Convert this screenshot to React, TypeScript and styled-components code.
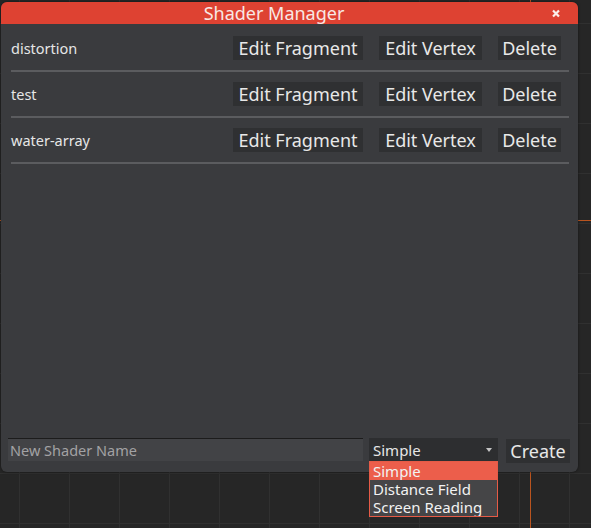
import React from 'react'
import styled, { createGlobalStyle } from 'styled-components'

const shaders = ['distortion', 'test', 'water-array']
const shaderTypes = ['Simple', 'Distance Field', 'Screen Reading']

const GlobalStyle = createGlobalStyle`
  html, body {
    margin: 0;
    padding: 0;
  }

  body {
    height: 528px;
    overflow: hidden;
    font-family: 'Noto Sans', 'DejaVu Sans', sans-serif;
    background-color: #262626;
    background-image:
      linear-gradient(to right, transparent 530px, #b9541f 530px, #b9541f 531px, transparent 531px),
      linear-gradient(to bottom, transparent 220px, #b9541f 220px, #b9541f 221px, transparent 221px),
      linear-gradient(to right, #303030 1px, transparent 1px),
      linear-gradient(to bottom, #303030 1px, transparent 1px);
    background-size: 100% 100%, 100% 100%, 50px 50px, 50px 50px;
    background-position: 0 0, 0 0, 19px 23px, 19px 23px;
    background-repeat: no-repeat, no-repeat, repeat, repeat;
  }
`

const Window = styled.div`
  margin: 2px 0 0 1px;
  width: 577px;
  height: 470px;
  display: flex;
  flex-direction: column;
  background: #3a3b3e;
  border-radius: 6px;
  box-shadow: 0 0 3px rgba(0, 0, 0, 0.5);
`

const TitleBar = styled.div`
  height: 22px;
  display: flex;
  align-items: center;
  background: #de4232;
  border-radius: 6px 6px 0 0;
  color: #f8e8e4;
  font-size: 18px;
`

const Title = styled.span`
  flex: 1;
  text-align: center;
  line-height: 22px;
`

const CloseButton = styled.button`
  width: 31px;
  padding: 0 0 0 5px;
  border: 0;
  background: none;
  display: flex;
`

const ShaderList = styled.div`
  padding: 12px 9px 0 10px;
`

const ShaderRow = styled.div`
  display: flex;
  align-items: center;
  height: 24px;
  padding-bottom: 10px;
  margin-bottom: 10px;
  border-bottom: 2px solid #5b5c5f;
`

const ShaderName = styled.span`
  flex: 1;
  color: #e6e6e6;
  font-size: 14.5px;
`

const Actions = styled.div`
  display: flex;
  gap: 16px;
  margin-right: 8px;
`

const ActionButton = styled.button<{ $width: number }>`
  width: ${p => p.$width}px;
  height: 24px;
  padding: 0;
  border: 0;
  background: #2f3032;
  color: #e8e8e8;
  font-family: inherit;
  font-size: 18px;
  line-height: 24px;
  text-align: center;
`

const Footer = styled.div`
  margin-top: auto;
  display: flex;
  align-items: flex-start;
  padding: 0 8px 9px 7px;
`

const NameInput = styled.input`
  flex: 1;
  height: 23px;
  box-sizing: border-box;
  padding: 0 2px;
  border: 0;
  border-top: 1px solid #1c1c1c;
  background: #424346;
  color: #e6e6e6;
  font-family: inherit;
  font-size: 14.5px;
  outline: none;

  &::placeholder {
    color: #a2a2a4;
  }
`

const SelectWrap = styled.div`
  position: relative;
  margin-left: 6px;
  width: 129px;
`

const SelectBox = styled.div`
  height: 23px;
  display: flex;
  align-items: center;
  justify-content: space-between;
  padding: 0 6px 0 4px;
  background: #2d2e30;
  color: #e6e6e6;
  font-size: 15px;
`

const Menu = styled.ul`
  position: absolute;
  top: 23px;
  left: 0;
  width: 129px;
  box-sizing: border-box;
  margin: 0;
  padding: 0;
  list-style: none;
  border: 1px solid #e65b47;
  background: #454547;
`

const MenuItem = styled.li<{ $active?: boolean }>`
  height: 18px;
  overflow: hidden;
  line-height: 18px;
  padding: 0 3px;
  background: ${p => (p.$active ? '#ec5e4b' : 'transparent')};
  color: #f2f2f2;
  font-size: 15px;
`

const CreateButton = styled(ActionButton)`
  margin-left: 8px;
  margin-top: 1px;
`

export default function App() {
  return (
    <>
      <GlobalStyle />
      <Window>
        <TitleBar>
          <Title>Shader Manager</Title>
          <CloseButton>
            <svg width="8" height="9" viewBox="0 0 8 9">
              <path d="M1 1.5L7 7.5M7 1.5L1 7.5" stroke="#fbeeea" strokeWidth="2.2" />
            </svg>
          </CloseButton>
        </TitleBar>
        <ShaderList>
          {shaders.map(name => (
            <ShaderRow key={name}>
              <ShaderName>{name}</ShaderName>
              <Actions>
                <ActionButton $width={130}>Edit Fragment</ActionButton>
                <ActionButton $width={103}>Edit Vertex</ActionButton>
                <ActionButton $width={63}>Delete</ActionButton>
              </Actions>
            </ShaderRow>
          ))}
        </ShaderList>
        <Footer>
          <NameInput placeholder="New Shader Name" />
          <SelectWrap>
            <SelectBox>
              <span>Simple</span>
              <svg width="6" height="4" viewBox="0 0 6 4">
                <path d="M0 0H6L3 4Z" fill="#c4c4c4" />
              </svg>
            </SelectBox>
            <Menu>
              {shaderTypes.map((t, i) => (
                <MenuItem key={t} $active={i === 0}>{t}</MenuItem>
              ))}
            </Menu>
          </SelectWrap>
          <CreateButton $width={64}>Create</CreateButton>
        </Footer>
      </Window>
    </>
  )
}
